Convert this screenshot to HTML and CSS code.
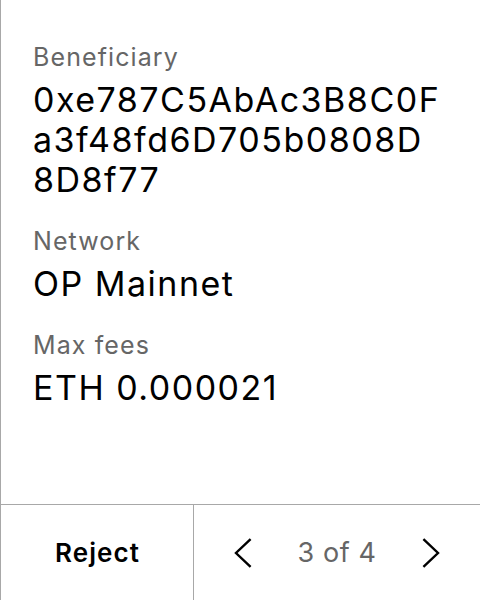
FILE: index.html
```html
<!DOCTYPE html>
<html>
<head>
<meta charset="utf-8">
<link rel="stylesheet" href="styles.css">
</head>
<body>
<div class="screen">
  <div class="content">
    <div class="field">
      <div class="label">Beneficiary</div>
      <div class="value">0xe787C5AbAc3B8C0F<br>a3f48fd6D705b0808D<br>8D8f77</div>
    </div>
    <div class="field">
      <div class="label">Network</div>
      <div class="value">OP Mainnet</div>
    </div>
    <div class="field">
      <div class="label">Max fees</div>
      <div class="value">ETH 0.000021</div>
    </div>
  </div>
  <div class="footer">
    <div class="reject">Reject</div>
    <div class="pager">
      <svg class="chev" viewBox="0 0 18 30" width="18" height="30"><path d="M16.6 1.2 L2 15 L16.6 28.8" fill="none" stroke="#000" stroke-width="2.4"/></svg>
      <span class="count">3 of 4</span>
      <svg class="chev" viewBox="0 0 18 30" width="18" height="30"><path d="M1.4 1.2 L16 15 L1.4 28.8" fill="none" stroke="#000" stroke-width="2.4"/></svg>
    </div>
  </div>
</div>
</body>
</html>
```

FILE: styles.css
```css
html, body {
  margin: 0;
  padding: 0;
  background: #fff;
}
body {
  font-family: Inter, "Noto Sans", sans-serif;
  color: #000;
}
.screen {
  width: 480px;
  height: 600px;
  box-sizing: border-box;
  border-left: 1px solid #a8a8a8;
  display: flex;
  flex-direction: column;
}
.content {
  flex: 1;
  padding: 41px 32px 0 32px;
  display: flex;
  flex-direction: column;
  gap: 25px;
}
.field {
  display: flex;
  flex-direction: column;
  gap: 7px;
}
.label {
  font-size: 25px;
  line-height: 32px;
  letter-spacing: 1.1px;
  color: #666;
}
.value {
  font-size: 34px;
  line-height: 40px;
  letter-spacing: 1.5px;
  color: #000;
}
.footer {
  height: 96px;
  box-sizing: border-box;
  border-top: 1px solid #a8a8a8;
  display: flex;
}
.reject {
  width: 191px;
  border-right: 1px solid #a8a8a8;
  display: flex;
  align-items: center;
  justify-content: center;
  font-size: 26px;
  font-weight: 600;
  letter-spacing: 1.1px;
  padding-left: 1px;
}
.pager {
  flex: 1;
  display: flex;
  align-items: center;
  justify-content: center;
  gap: 45px;
}
.count {
  font-size: 27px;
  letter-spacing: 0.6px;
  color: #666;
}
.chev {
  display: block;
}
```
